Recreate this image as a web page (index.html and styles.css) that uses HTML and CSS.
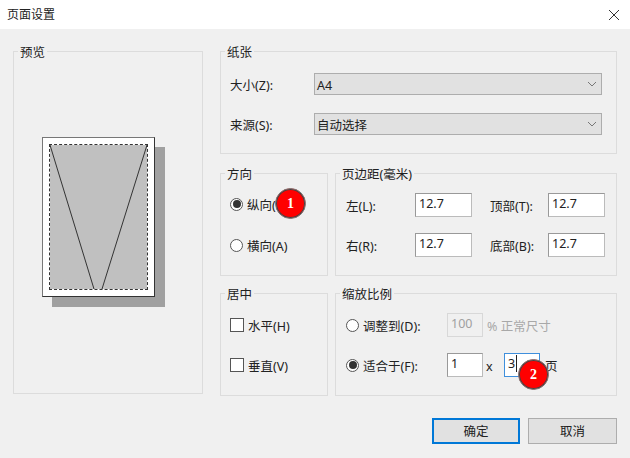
FILE: index.html
```html
<!DOCTYPE html>
<html lang="zh-CN">
<head>
<meta charset="utf-8">
<title>页面设置</title>
<link rel="stylesheet" href="styles.css">
</head>
<body>
<div class="dialog">
  <header class="titlebar">
    <span class="title">页面设置</span>
    <svg class="close" width="12" height="12" viewBox="0 0 12 12"><path d="M1 1L11 11M11 1L1 11" stroke="#333" stroke-width="1" fill="none"/></svg>
  </header>
  <main class="content">
    <section class="group preview">
      <span class="legend">预览</span>
      <div class="sheet">
        <div class="margin-box">
          <svg class="sheet-lines" width="97" height="144" viewBox="0 0 97 144"><path d="M0 0L44 144M97 0L52 144" stroke="#333" stroke-width="1" fill="none"/></svg>
        </div>
      </div>
    </section>
    <div class="side">
      <section class="group paper">
        <span class="legend">纸张</span>
        <div class="field-row">
          <span class="label">大小(Z):</span>
          <div class="select"><span class="label">A4</span><svg width="10" height="6" viewBox="0 0 10 6"><path d="M1 1L5 5L9 1" stroke="#777" fill="none"/></svg></div>
        </div>
        <div class="field-row">
          <span class="label">来源(S):</span>
          <div class="select"><span class="label">自动选择</span><svg width="10" height="6" viewBox="0 0 10 6"><path d="M1 1L5 5L9 1" stroke="#777" fill="none"/></svg></div>
        </div>
      </section>
      <div class="split first">
        <section class="group options">
          <span class="legend">方向</span>
          <div class="option"><span class="radio checked"></span><span class="label">纵向(O)</span></div>
          <div class="option"><span class="radio"></span><span class="label">横向(A)</span></div>
          <span class="badge badge-one">1</span>
        </section>
        <section class="group margins">
          <span class="legend">页边距(毫米)</span>
          <div class="margin-row">
            <span class="label">左(L):</span><div class="input">12.7</div>
            <span class="label">顶部(T):</span><div class="input">12.7</div>
          </div>
          <div class="margin-row">
            <span class="label">右(R):</span><div class="input">12.7</div>
            <span class="label">底部(B):</span><div class="input">12.7</div>
          </div>
        </section>
      </div>
      <div class="split second">
        <section class="group options center">
          <span class="legend">居中</span>
          <div class="option"><span class="check"></span><span class="label">水平(H)</span></div>
          <div class="option"><span class="check"></span><span class="label">垂直(V)</span></div>
        </section>
        <section class="group scale">
          <span class="legend">缩放比例</span>
          <div class="scale-row">
            <div class="scale-choice"><span class="radio"></span><span class="label">调整到(D):</span></div>
            <div class="input small disabled">100</div>
            <span class="muted label">% 正常尺寸</span>
          </div>
          <div class="scale-row">
            <div class="scale-choice"><span class="radio checked"></span><span class="label">适合于(F):</span></div>
            <div class="input small">1</div>
            <span class="times label">x</span>
            <div class="input small focused"><span class="caret">3</span></div>
            <span class="pages label">页</span>
          </div>
          <span class="badge badge-two">2</span>
        </section>
      </div>
    </div>
  </main>
  <footer class="actions">
    <div class="button primary"><span class="nudge">确定</span></div>
    <div class="button"><span class="nudge">取消</span></div>
  </footer>
</div>
</body>
</html>
```
FILE: styles.css
```css
* { box-sizing: border-box; }
html, body { margin: 0; padding: 0; }
body {
  width: 630px;
  height: 458px;
  overflow: hidden;
  background: #f0f0f0;
  color: #222;
  font-family: "Noto Sans", "Noto Sans CJK SC", sans-serif;
  font-size: 12.5px;
  line-height: 16px;
}
.dialog { width: 630px; height: 458px; }
.titlebar {
  height: 29px;
  background: #fff;
  display: flex;
  align-items: center;
  justify-content: space-between;
  padding: 0 10px 0 7px;
}
.title { font-size: 12px; }
.label { padding-top: 4px; }
.nudge { padding-top: 2px; }
.content {
  display: grid;
  grid-template-columns: 190px 397px;
  column-gap: 17px;
  padding: 22px 13px 0;
}
.group {
  position: relative;
  border: 1px solid #dcdcdc;
}
.legend {
  position: absolute;
  top: -7px;
  left: 4px;
  padding: 0 2px;
  height: 12px;
  background: #f0f0f0;
}
.preview { height: 343px; padding: 85px 0 0 28px; }
.sheet {
  width: 113px;
  height: 160px;
  padding: 7px;
  background: #fff;
  border: 1px solid #777;
  border-right-color: #333;
  border-bottom-color: #333;
  box-shadow: 10px 10px 0 #a0a0a0;
}
.margin-box {
  width: 97px;
  height: 144px;
  background: #c0c0c0;
  outline: 1px dashed #333;
}
.sheet-lines { display: block; }
.paper {
  height: 103px;
  padding: 21px 15px 0 9px;
  display: flex;
  flex-direction: column;
  gap: 18px;
}
.field-row {
  display: grid;
  grid-template-columns: 84px 288px;
  align-items: center;
}
.select {
  height: 22px;
  background: #e1e1e1;
  border: 1px solid #adadad;
  display: flex;
  align-items: center;
  justify-content: space-between;
  padding: 0 4px 1px 2px;
}
.split {
  display: grid;
  grid-template-columns: 108px 282px;
  column-gap: 7px;
  height: 103px;
}
.first { margin-top: 19px; }
.second { margin-top: 17px; }
.options {
  padding: 22px 0 0 9px;
  display: flex;
  flex-direction: column;
  gap: 25px;
}
.center { padding-top: 23px; gap: 24px; }
.option, .scale-choice {
  display: flex;
  align-items: center;
  gap: 4px;
  height: 16px;
  white-space: nowrap;
}
.radio {
  flex: none;
  width: 13px;
  height: 13px;
  border: 1px solid #555;
  border-radius: 50%;
  background: #fff;
  display: flex;
  align-items: center;
  justify-content: center;
}
.radio.checked::after {
  content: "";
  width: 8px;
  height: 8px;
  border-radius: 50%;
  background: #333;
}
.check {
  flex: none;
  width: 14px;
  height: 14px;
  border: 1px solid #555;
  background: #fff;
}
.margins {
  padding: 19px 0 0 10px;
  display: flex;
  flex-direction: column;
  gap: 16px;
}
.margin-row {
  display: grid;
  grid-template-columns: 69px 57px 18px 58px 57px;
  align-items: center;
}
.margin-row > span:nth-of-type(2) { grid-column: 4; }
.input {
  height: 24px;
  padding: 2px 3px;
  background: #fff;
  border: 1px solid #999;
  border-right-color: #bbb;
  border-bottom-color: #bbb;
}
.small { width: 36px; flex: none; }
.disabled {
  background: #f0f0f0;
  color: #a0a0a0;
  border-color: #d8d8d8;
}
.focused { border-color: #3f8fdc; }
.caret { padding-right: 1px; border-right: 1px solid #222; }
.muted { color: #a8a8a8; margin-left: 4px; }
.scale {
  padding: 19px 0 0 10px;
  display: flex;
  flex-direction: column;
  gap: 16px;
}
.scale-row {
  display: flex;
  align-items: center;
  height: 24px;
}
.scale-choice { width: 101px; flex: none; }
.times { width: 21px; padding-left: 3px; flex: none; }
.pages { margin-left: 5px; }
.badge {
  position: absolute;
  width: 31px;
  height: 31px;
  border-radius: 50%;
  background: #ff0000;
  color: #fff;
  border: 1px solid #777;
  box-shadow: inset 0 0 0 1px #444;
  display: flex;
  align-items: center;
  justify-content: center;
  font-family: "Liberation Serif", serif;
  font-weight: bold;
  font-size: 14px;
}
.badge-one { left: 54px; top: 14px; }
.badge-two { left: 182px; top: 65px; }
.actions {
  display: flex;
  justify-content: flex-end;
  gap: 8px;
  padding: 22px 13px 0 0;
}
.button {
  width: 89px;
  height: 26px;
  background: #e1e1e1;
  border: 1px solid #adadad;
  display: flex;
  align-items: center;
  justify-content: center;
}
.primary { width: 88px; border: 2px solid #0078d7; }
```
